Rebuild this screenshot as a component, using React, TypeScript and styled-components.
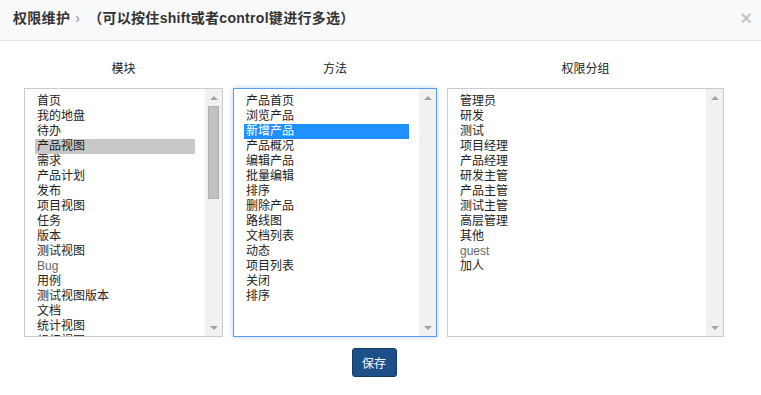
import React from 'react'
import { styled, createGlobalStyle } from 'styled-components'

const FONT = `"Liberation Sans", "Noto Sans CJK SC", sans-serif`

const GlobalStyle = createGlobalStyle`
  html, body {
    margin: 0;
    padding: 0;
    background: #fff;
    font-family: ${FONT};
    color: #333;
  }
`

type Column = {
  title: string
  width: number
  items: string[]
  selected: number
  focused?: boolean
  thumb?: number
}

const columns: Column[] = [
  {
    title: '模块',
    width: 199,
    selected: 3,
    thumb: 93,
    items: ['首页', '我的地盘', '待办', '产品视图', '需求', '产品计划', '发布', '项目视图', '任务', '版本', '测试视图', 'Bug', '用例', '测试视图版本', '文档', '统计视图', '组织视图'],
  },
  {
    title: '方法',
    width: 204,
    selected: 2,
    focused: true,
    items: ['产品首页', '浏览产品', '新增产品', '产品概况', '编辑产品', '批量编辑', '排序', '删除产品', '路线图', '文档列表', '动态', '项目列表', '关闭', '排序'],
  },
  {
    title: '权限分组',
    width: 277,
    selected: -1,
    items: ['管理员', '研发', '测试', '项目经理', '产品经理', '研发主管', '产品主管', '测试主管', '高层管理', '其他', 'guest', '加人'],
  },
]

const App = () => {
  return (
    <>
      <GlobalStyle />
      <StyledHeader>
        <StyledTitle>
          权限维护<StyledSep>›</StyledSep>（可以按住shift或者control键进行多选）
        </StyledTitle>
        <StyledClose>×</StyledClose>
      </StyledHeader>
      <StyledBody>
        <StyledColumns>
          {columns.map((col) => (
            <StyledColumn key={col.title} $width={col.width}>
              <StyledLabel>{col.title}</StyledLabel>
              <StyledSelect $focused={!!col.focused}>
                <StyledList>
                  {col.items.map((item, i) => (
                    <StyledOption
                      key={i}
                      $selected={i === col.selected}
                      $focused={!!col.focused}
                      $latin={/^[a-z]/i.test(item)}
                    >
                      {item}
                    </StyledOption>
                  ))}
                </StyledList>
                <StyledScrollbar>
                  <StyledArrowButton>
                    <StyledArrow $up />
                  </StyledArrowButton>
                  <StyledTrack>
                    {col.thumb ? <StyledThumb style={{ height: col.thumb }} /> : null}
                  </StyledTrack>
                  <StyledArrowButton>
                    <StyledArrow />
                  </StyledArrowButton>
                </StyledScrollbar>
              </StyledSelect>
            </StyledColumn>
          ))}
        </StyledColumns>
        <StyledFooter>
          <StyledSaveButton>保存</StyledSaveButton>
        </StyledFooter>
      </StyledBody>
    </>
  )
}

const StyledHeader = styled.div`
  display: flex;
  align-items: center;
  justify-content: space-between;
  height: 41px;
  padding: 0 9px 4px 13px;
  box-sizing: border-box;
  background: #f8f9fb;
  border-bottom: 1px solid #e5e5e5;
`

const StyledTitle = styled.div`
  font-size: 14px;
  font-weight: 700;
  line-height: 20px;
  color: #333;
  white-space: nowrap;
  letter-spacing: 0.3px;
`

const StyledSep = styled.span`
  display: inline-block;
  margin: 0 8px 0 5px;
  font-weight: 400;
  color: #888;
`

const StyledClose = styled.span`
  font-size: 20px;
  font-weight: 700;
  line-height: 1;
  color: #000;
  opacity: 0.2;
`

const StyledBody = styled.div`
  width: fit-content;
  padding: 20px 24px 0;
`

const StyledColumns = styled.div`
  display: flex;
  gap: 10px;
`

const StyledColumn = styled.div<{ $width: number }>`
  display: flex;
  flex-direction: column;
  width: ${(p) => p.$width}px;
  flex: none;
`

const StyledLabel = styled.div`
  font-size: 12px;
  line-height: 16px;
  text-align: center;
  color: #222;
  margin-bottom: 11px;
`

const StyledSelect = styled.div<{ $focused: boolean }>`
  display: flex;
  height: 249px;
  box-sizing: border-box;
  border: 1px solid ${(p) => (p.$focused ? '#5b9bf5' : '#cbcbcb')};
  box-shadow: ${(p) => (p.$focused ? '0 0 5px rgba(91, 155, 245, 0.45)' : 'none')};
  background: #fff;
`

const StyledList = styled.div`
  flex: 1;
  min-width: 0;
  padding: 5px 10px;
  overflow: hidden;
`

const StyledOption = styled.div<{ $selected: boolean; $focused: boolean; $latin: boolean }>`
  font-size: 12px;
  line-height: 15px;
  height: 15px;
  padding-left: 2px;
  white-space: nowrap;
  color: ${(p) => (p.$selected && p.$focused ? '#fff' : p.$latin ? '#666' : '#222')};
  background: ${(p) => (p.$selected ? (p.$focused ? '#1e90ff' : '#c8c8c8') : 'transparent')};
`

const StyledScrollbar = styled.div`
  width: 17px;
  flex: none;
  display: flex;
  flex-direction: column;
  background: #f1f1f1;
`

const StyledArrowButton = styled.div`
  height: 17px;
  flex: none;
  display: flex;
  align-items: center;
  justify-content: center;
`

const StyledArrow = styled.div<{ $up?: boolean }>`
  width: 0;
  height: 0;
  border-left: 4px solid transparent;
  border-right: 4px solid transparent;
  ${(p) => (p.$up ? 'border-bottom: 4px solid #a3a3a3;' : 'border-top: 4px solid #a3a3a3;')}
`

const StyledTrack = styled.div`
  flex: 1;
  display: flex;
  flex-direction: column;
  align-items: center;
`

const StyledThumb = styled.div`
  width: 11px;
  box-sizing: border-box;
  background: #c1c1c1;
  border: 1px solid #b0b0b0;
`

const StyledFooter = styled.div`
  display: flex;
  justify-content: center;
  padding-top: 11px;
`

const StyledSaveButton = styled.button`
  width: 45px;
  height: 29px;
  padding: 0;
  font-family: ${FONT};
  font-size: 12px;
  color: #fff;
  background: #1d5088;
  border: 1px solid #123b66;
  border-radius: 3px;
`

export default App
